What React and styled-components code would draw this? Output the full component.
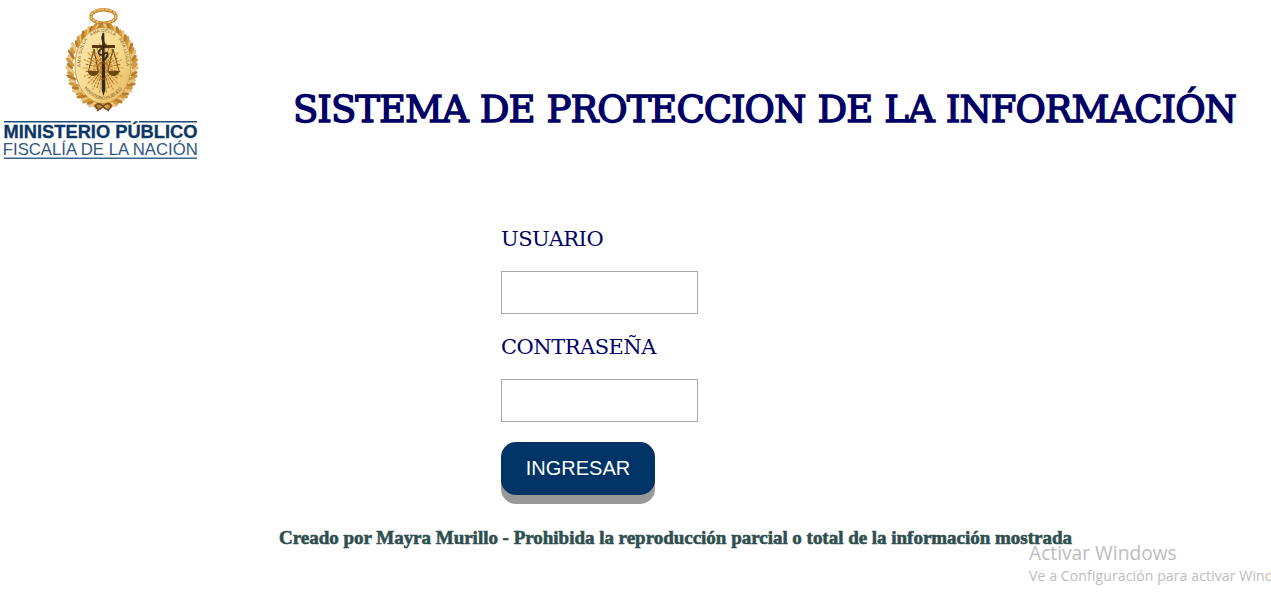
import React from "react";
import styled, { createGlobalStyle } from "styled-components";

const GlobalStyle = createGlobalStyle`
  * { box-sizing: border-box; }
  body { margin: 0; background: #fff; overflow: hidden; }
`;

const Page = styled.div`
  position: relative;
  height: 599px;
  overflow: hidden;
  display: flex;
  flex-direction: column;
`;

const Header = styled.header`
  display: flex;
  height: 225px;
`;

const LogoSvg = styled.svg`
  flex: none;
  width: 200px;
  height: 164px;
`;

const Title = styled.h1`
  margin: 85px 0 0 93px;
  font: 400 37px/50px "DejaVu Serif", serif;
  letter-spacing: -1px;
  word-spacing: 1.4px;
  -webkit-text-stroke: 1.4px #000066;
  color: #000066;
  white-space: nowrap;
`;

const Form = styled.form`
  display: flex;
  flex-direction: column;
  align-items: flex-start;
  margin-left: 501px;
`;

const Label = styled.label`
  font: 400 21px/28px "DejaVu Serif", serif;
  letter-spacing: -0.5px;
  color: #000066;
`;

const Input = styled.input`
  width: 197px;
  height: 43px;
  margin: 18px 0 19px;
  padding: 0 10px;
  border: 1px solid #a9a9a9;
  background: #fff;
  outline: none;
`;

const Button = styled.button`
  width: 154px;
  height: 53px;
  margin-top: 1px;
  padding: 0;
  border: 0;
  border-radius: 15px;
  background: #003366;
  box-shadow: 0 9px #999;
  color: #fff;
  font: 400 20px "Liberation Sans", Arial, sans-serif;
`;

const Credit = styled.p`
  margin: 30px 0 0 279px;
  font: 700 19px/26px "Liberation Serif", serif;
  letter-spacing: -0.02px;
  -webkit-text-stroke: 0.6px #2f4f4f;
  color: #2f4f4f;
  white-space: nowrap;
`;

const Watermark = styled.aside`
  position: absolute;
  left: 1029px;
  top: 540px;
  color: #bdbdbd;
  font-family: "Open Sans", "Noto Sans", sans-serif;
  white-space: nowrap;
`;

const WatermarkTitle = styled.div`
  font-size: 19.2px;
  line-height: 26px;
`;

const WatermarkText = styled.div`
  font-size: 14px;
  line-height: 20px;
  letter-spacing: 0.12px;
`;

const CX = 103;
const CY = 66;

function Wreath() {
  const leaves = [];
  for (let i = 0; i < 64; i++) {
    const a = (i / 64) * Math.PI * 2;
    const left = Math.cos(a) < 0;
    const outer = left && Math.sin(a) > -0.5 ? 1.5 : 0;
    const x = CX + Math.cos(a) * (31.5 + outer);
    const y = CY + Math.sin(a) * 39.5;
    const turn = (a * 180) / Math.PI + (left ? 42 : -42);
    leaves.push(
      <ellipse
        key={i}
        cx={x}
        cy={y}
        rx={i % 2 ? 4.9 + outer * 0.4 : 3.8}
        ry="1.5"
        fill={["#d49a3c", "#f0c873", "#bb7c28"][i % 3]}
        stroke="#a76c20"
        strokeWidth=".25"
        transform={`rotate(${turn} ${x} ${y})`}
      />
    );
  }
  return <g>{leaves}</g>;
}

function Rays() {
  const rays = [];
  for (let i = 0; i < 36; i++) {
    const a = (i / 36) * Math.PI * 2;
    const r = i % 2 ? 0.86 : 1;
    rays.push(
      <line
        key={i}
        x1={CX}
        y1="68"
        x2={CX + Math.cos(a) * 20.5 * r}
        y2={68 + Math.sin(a) * 25 * r}
        stroke={i % 2 ? "#b06c1c" : "#cf923a"}
        strokeWidth="1.2"
        strokeDasharray="3 .7"
      />
    );
  }
  return <g>{rays}</g>;
}

function Logo() {
  return (
    <LogoSvg viewBox="0 0 200 164" aria-label="Ministerio Público">
      <defs>
        <linearGradient id="gold" x1="0" y1="0" x2="1" y2="1">
          <stop offset="0" stopColor="#fbe9b4" />
          <stop offset=".6" stopColor="#f6d88a" />
          <stop offset="1" stopColor="#e5b057" />
        </linearGradient>
        <path id="arcTop" d="M85 42 Q103 22 121 42" />
        <path id="arcLeft" d="M80.500 67 Q80 50 88 38" />
        <path id="arcRight" d="M118.500 39 Q126 50 126.500 68" />
        <path id="arcBottom" d="M84 88 Q103 112 124 87" />
      </defs>
      <ellipse cx="103.500" cy="16.500" rx="12.500" ry="6.800" fill="none" stroke="#c58a31" strokeWidth="3.400" />
      <ellipse cx="103.500" cy="16.200" rx="12.500" ry="6.800" fill="none" stroke="#f2cd7c" strokeWidth="1.300" strokeDasharray="3 1" />
      <path d="M95 24 Q103 20 112 24 L109 28 H98Z" fill="#c78c33" />
      <Wreath />
      <ellipse cx={CX} cy="65.500" rx="28" ry="38" fill="url(#gold)" stroke="#c28a35" strokeWidth=".8" />
      <Rays />
      <path d="M94 49 L88.500 71 M94 49 L98 71 M113 49 L108 71 M113 49 L119 71" fill="none" stroke="#63420f" strokeWidth=".9" />
      <path d="M92 45 H115 V48 H92Z" fill="#59380d" />
      <path d="M87.500 71 H99 Q98 76 93 76 Q89 76 87.500 71Z M107.500 71 H120 Q118 76 113.500 76 Q109 76 107.500 71Z" fill="#6c450f" />
      <path d="M102.300 33 H104.300 L105.300 90 L103.500 96 L101.700 90Z" fill="#352817" />
      <path d="M103 35 C99 43 109 43 103.500 48 C95 51 99 57 104 54 C110 50 108 58 103 60" fill="none" stroke="#3c2b17" strokeWidth="1.800" />
      <path d="M99 63 H108 M100 79 H107" stroke="#936019" strokeWidth="1" />
      <g fill="#80581e" fontFamily="Liberation Sans, sans-serif" fontSize="4.600">
        <text><textPath href="#arcLeft" textLength="29">AMA SULLA</textPath></text>
        <text><textPath href="#arcTop" startOffset="50%" textAnchor="middle">AMA QELLA</textPath></text>
        <text><textPath href="#arcRight" textLength="29">AMA LLULLA</textPath></text>
        <text><textPath href="#arcBottom" textLength="46">MINISTERIO PUBLICO</textPath></text>
      </g>
      <path d="M103 106 C97 101 93 106 98 109 C100 110 102 108 103 106 C109 101 114 105 109 109 C106 110 104 108 103 106 M102 107 L97 111 M104 107 L109 111" fill="none" stroke="#75491a" strokeWidth="1.600" />
      <path d="M4 121.700 H131 M139 121.700 H197" stroke="#1d4a78" strokeWidth="1.600" />
      <path d="M4 158.200 H197" stroke="#3b648c" strokeWidth="1.600" />
      <g fontFamily="Liberation Sans, Arial, sans-serif">
        <text x="3.500" y="138.300" fontSize="17.500" fontWeight="700" fill="#0b3765" stroke="#0b3765" strokeWidth=".3" textLength="194" lengthAdjust="spacingAndGlyphs">MINISTERIO PÚBLICO</text>
        <text x="2.800" y="155" fontSize="17.300" fill="#31577f" textLength="195" lengthAdjust="spacingAndGlyphs">FISCALÍA DE LA NACIÓN</text>
      </g>
    </LogoSvg>
  );
}

export default function App() {
  return (
    <Page>
      <GlobalStyle />
      <Header>
        <Logo />
        <Title>SISTEMA DE PROTECCION DE LA INFORMACIÓN</Title>
      </Header>
      <Form onSubmit={(e) => e.preventDefault()}>
        <Label htmlFor="user">USUARIO</Label>
        <Input id="user" type="text" />
        <Label htmlFor="pass">CONTRASEÑA</Label>
        <Input id="pass" type="password" />
        <Button type="submit">INGRESAR</Button>
      </Form>
      <Credit>Creado por Mayra Murillo - Prohibida la reproducción parcial o total de la información mostrada</Credit>
      <Watermark>
        <WatermarkTitle>Activar Windows</WatermarkTitle>
        <WatermarkText>Ve a Configuración para activar Windows.</WatermarkText>
      </Watermark>
    </Page>
  );
}
